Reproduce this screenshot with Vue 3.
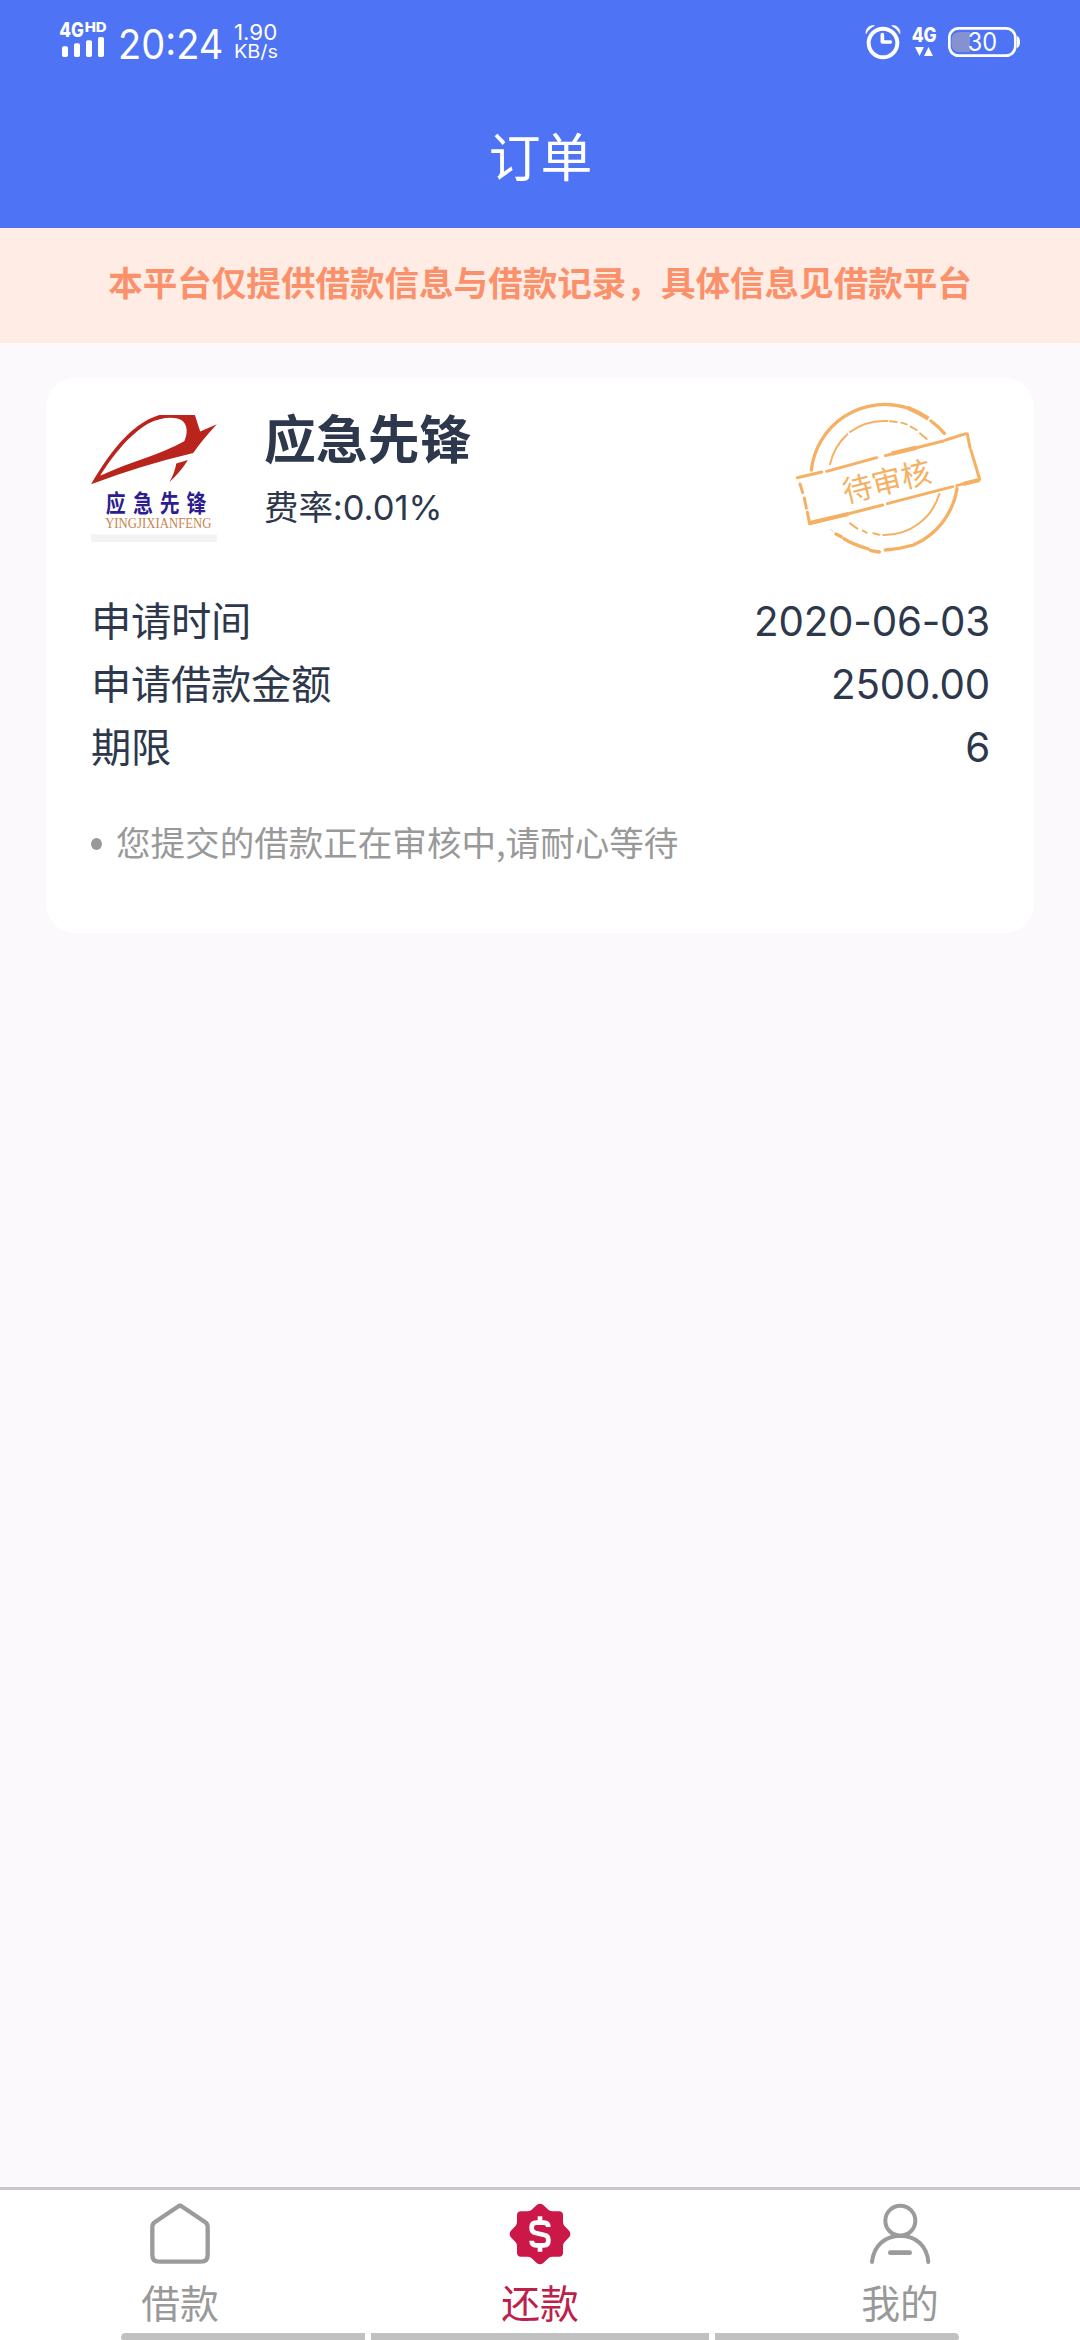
<script setup>
const notice = '本平台仅提供借款信息与借款记录，具体信息见借款平台'
const order = {
  name: '应急先锋',
  rate: '0.01%',
  tip: '您提交的借款正在审核中,请耐心等待',
  rows: [
    { label: '申请时间', value: '2020-06-03' },
    { label: '申请借款金额', value: '2500.00' },
    { label: '期限', value: '6' },
  ],
}
const tabs = [
  { id: 'loan', label: '借款' },
  { id: 'repay', label: '还款', active: true },
  { id: 'mine', label: '我的' },
]
</script>

<template>
  <div class="page">
    <header class="header">
      <div class="status">
        <svg class="status-left" viewBox="0 0 780 240" fill="#fff">
          <text x="58" y="110" class="bold" font-size="60" textLength="74" lengthAdjust="spacingAndGlyphs">4G</text>
          <text x="134" y="96" class="bold" font-size="40" textLength="66" lengthAdjust="spacingAndGlyphs">HD</text>
          <rect x="66" y="139" width="18" height="32" rx="5" />
          <rect x="102" y="130" width="18" height="41" rx="5" />
          <rect x="138" y="121" width="18" height="50" rx="5" />
          <rect x="174" y="111" width="18" height="60" rx="5" />
          <text x="234" y="177" font-size="122" textLength="316" lengthAdjust="spacingAndGlyphs">20:24</text>
          <text x="582" y="120" font-size="64" textLength="130" lengthAdjust="spacingAndGlyphs">1.90</text>
          <text x="582" y="174" font-size="54" textLength="132" lengthAdjust="spacingAndGlyphs">KB/s</text>
        </svg>
        <svg class="status-right" viewBox="0 0 720 240" fill="#fff">
          <circle cx="129" cy="129" r="43" fill="none" stroke="#fff" stroke-width="12" />
          <path d="M127 104v22h24" fill="none" stroke="#fff" stroke-width="11" stroke-linecap="round" stroke-linejoin="round" />
          <path d="M78 101C77 86 88 75 103 77C93 82 84 90 78 101ZM180 101C181 86 170 75 155 77C165 82 174 90 180 101Z" stroke="#fff" stroke-width="2" />
          <text x="215" y="125" class="bold" font-size="59" textLength="75" lengthAdjust="spacingAndGlyphs">4G</text>
          <path d="M225 141h27l-13.500 27zM252 168h27l-13.500-27z" />
          <path d="M390 96v60h-27q-28 0-28-22v-16q0-22 28-22z" fill="#8592d2" />
          <rect x="328" y="85" width="198" height="82" rx="28" fill="none" stroke="#fff" stroke-width="8" />
          <path d="M531 108q9 3 9 18t-9 18z" />
          <text x="383" y="153" font-size="75" textLength="88" lengthAdjust="spacingAndGlyphs">30</text>
        </svg>
      </div>
      <h1 class="title">订单</h1>
    </header>

    <div class="notice">{{ notice }}</div>

    <main class="content">
      <section class="card">
        <div class="card-head">
          <svg class="logo" viewBox="63 104 378 382">
            <path fill="#b9251c" fill-rule="evenodd" d="M63 312C112 228 180 130 268 104H375L391 154L441 132Q400 176 370 218Q210 256 63 312ZM90 287C190 240 270 225 343 183C354 160 354 132 334 119C310 106 270 112 238 128C180 160 128 226 90 287Z" />
            <path fill="#b9251c" d="M354 239L319 250Q314 280 298 306Q334 272 354 239Z" />
            <text class="logo-cn" transform="translate(107 396) scale(.82 1)" x="0 100 198 296" y="0">应急先锋</text>
            <text class="logo-en" x="105" y="445" textLength="320" lengthAdjust="spacingAndGlyphs">YINGJIXIANFENG</text>
            <rect x="63" y="463" width="378" height="23" fill="#f3f3f3" />
          </svg>
          <div class="merchant">
            <h2 class="name">{{ order.name }}</h2>
            <p class="rate">费率:<span class="num">{{ order.rate }}</span></p>
          </div>
          <svg class="stamp" viewBox="75 54 570 480" fill="none" stroke="#f5b063" stroke-linecap="round">
            <path stroke-width="10" d="M124 270A222 222 0 0 1 413 84" />
            <path stroke-width="13" stroke-linecap="butt" d="M413 83Q445 96 475 116" />
            <path stroke-width="10" d="M483 123Q505 139 523 160M561 326A222 222 0 0 1 430 495Q390 507 346 510M328 516L302 512M295 507Q240 490 222 476M214 470L198 462" />
            <path stroke-width="2" d="M188 452L182 448" />
            <path stroke-width="6" d="M180 253A172 172 0 0 1 232 163M240 156A172 172 0 0 1 352 123M360 124L380 126M394 128L410 133M422 140L440 150M450 160L470 177M508 342A172 172 0 0 1 340 465M328 464L310 460M290 458L278 452M262 446L240 430" />
            <path stroke-width="9" d="M82 293L155 276M170 274L320 233M346 227L520 183M527 180L588 161M592 162L600 203M603 211L629 298L560 317M548 320L352 371M338 375L119 431L112 397M109 385L103 354M98 338L90 312" />
            <path stroke-width="13" stroke-linecap="butt" d="M119 429L235 402M365 221L440 203M580 312L628 300" />
            <text class="stamp-text" transform="translate(350 304) rotate(-14)" y="33">待审核</text>
          </svg>
        </div>

        <dl class="rows">
          <div v-for="row in order.rows" :key="row.label" class="row">
            <dt>{{ row.label }}</dt>
            <dd class="num">{{ row.value }}</dd>
          </div>
        </dl>

        <p class="tip"><i class="dot"></i>{{ order.tip }}</p>
      </section>
    </main>

    <nav class="tabbar">
      <a v-for="tab in tabs" :key="tab.id" class="tab" :class="{ active: tab.active }">
        <svg v-if="tab.id === 'loan'" class="icon" viewBox="0 0 186 186" fill="none" stroke="#9b9b9b" stroke-width="13">
          <path d="M86 11Q93 6 100 11L169 58Q176 63 176 72V156Q176 176 156 176H30Q10 176 10 156V72Q10 63 17 58Z" stroke-linejoin="round" />
        </svg>
        <svg v-else-if="tab.id === 'repay'" class="icon" viewBox="0 0 186 186">
          <path fill="#cc1848" d="M84 5Q93-1 102 5L119 21Q124 25 131 25H150Q162 25 162 37V56Q162 63 166 68L181 84Q187 93 181 102L166 118Q162 123 162 130V149Q162 161 150 161H131Q124 161 119 165L102 181Q93 187 84 181L67 165Q62 161 55 161H36Q24 161 24 149V130Q24 123 20 118L5 102Q-1 93 5 84L20 68Q24 63 24 56V37Q24 25 36 25H55Q62 25 67 21Z" />
          <path fill="none" stroke="#fff" stroke-width="14" d="M118 72Q118 59 105 59H82Q68 59 68 72V76Q68 88 80 90L106 96Q118 98 118 110V114Q118 127 105 127H82Q68 127 68 113M93 40V62M93 126V146" />
        </svg>
        <svg v-else class="icon" viewBox="0 0 186 186" fill="none" stroke="#9b9b9b" stroke-width="12" stroke-linecap="round">
          <circle cx="94" cy="53" r="45" />
          <path d="M9 177C14 128 48 98 94 98S174 128 178 177" />
          <path d="M64 149H122" stroke-width="14" />
        </svg>
        <span class="tab-label">{{ tab.label }}</span>
      </a>
    </nav>
    <div class="gesture">
      <i class="seg"></i><i class="seg mid"></i><i class="seg"></i>
    </div>
  </div>
</template>

<style>
body {
  margin: 0;
}
</style>

<style scoped>
.page {
  display: flex;
  flex-direction: column;
  width: 1080px;
  height: 2340px;
  overflow: hidden;
  background: #fbf9fc;
  color: #2d384c;
  font-family: "Noto Sans CJK SC", sans-serif;
}

h1, h2, p, dl, dd {
  margin: 0;
}

.num {
  font-family: Inter, sans-serif;
}

.header {
  height: 228px;
  background: #4e73f4;
  color: #fff;
}

.status {
  display: flex;
  justify-content: space-between;
  height: 80px;
  padding-left: 40px;
  font-family: Inter, sans-serif;
}

.status-left {
  width: 260px;
  height: 80px;
}

.status-right {
  width: 240px;
  height: 80px;
}

.bold {
  font-weight: 800;
}

.title {
  padding-left: 1px;
  font-size: 51.84px;
  font-weight: 400;
  line-height: 149px;
  text-align: center;
}

.notice {
  height: 115px;
  background: #ffece4;
  color: #fb916b;
  font-size: 34.56px;
  font-weight: 700;
  line-height: 106px;
  text-align: center;
  white-space: nowrap;
}

.content {
  flex: 1;
  padding: 35px 46px 0;
}

.card {
  box-sizing: border-box;
  height: 555px;
  padding: 31px 44px 0 45px;
  border-radius: 29px;
  background: #fff;
}

.card-head {
  display: flex;
  align-items: flex-start;
  height: 178px;
}

.logo {
  width: 126px;
  height: 127px;
  margin-top: 6px;
  overflow: visible;
}

.logo-cn {
  fill: #2e1d8f;
  font-size: 73px;
  font-weight: 700;
}

.logo-en {
  fill: #c98450;
  font-family: "Liberation Serif", serif;
  font-size: 46px;
}

.merchant {
  display: flex;
  flex-direction: column;
  gap: 22px;
  margin: 2px 0 0 47px;
}

.name {
  font-size: 51.84px;
  font-weight: 700;
  line-height: 52px;
}

.rate {
  font-size: 34.56px;
  line-height: 40px;
}

.rate .num {
  line-height: 1;
}

.stamp {
  width: 190px;
  height: 160px;
  margin: -11px 5px 0 auto;
  overflow: visible;
}

.stamp-text {
  fill: #f5b063;
  stroke: none;
  font-size: 90px;
  font-weight: 400;
  text-anchor: middle;
}

.row {
  display: flex;
  align-items: baseline;
  justify-content: space-between;
  height: 63px;
  font-size: 40.32px;
  line-height: 63px;
}

.row dt {
  letter-spacing: -0.3px;
}

.row .num {
  letter-spacing: -0.2px;
  line-height: 1;
}

.tip {
  display: flex;
  align-items: center;
  gap: 14px;
  margin-top: 45px;
  color: #999;
  font-size: 34.56px;
  line-height: 40px;
}

.dot {
  width: 11px;
  height: 12px;
  margin-top: 6px;
  border-radius: 50%;
  background: #999;
}

.tabbar {
  display: flex;
  height: 143px;
  border-top: 3px solid #c8c8c8;
  background: #fff;
}

.tab {
  display: flex;
  flex: 1;
  flex-direction: column;
  align-items: center;
  color: #999;
}

.tab.active {
  color: #bd2048;
}

.icon {
  width: 62px;
  height: 62px;
  margin-top: 13px;
}

.tab-label {
  margin-top: 16px;
  font-size: 38.8px;
  line-height: 40px;
}

.gesture {
  display: flex;
  justify-content: center;
  gap: 6px;
  height: 7px;
  background: #fff;
}

.seg {
  width: 244px;
  background: #c1c1c1;
}

.seg.mid {
  width: 338px;
}

.seg:first-child {
  border-radius: 5px 0 0 3px;
}

.seg:last-child {
  border-radius: 0 5px 3px 0;
}
</style>
